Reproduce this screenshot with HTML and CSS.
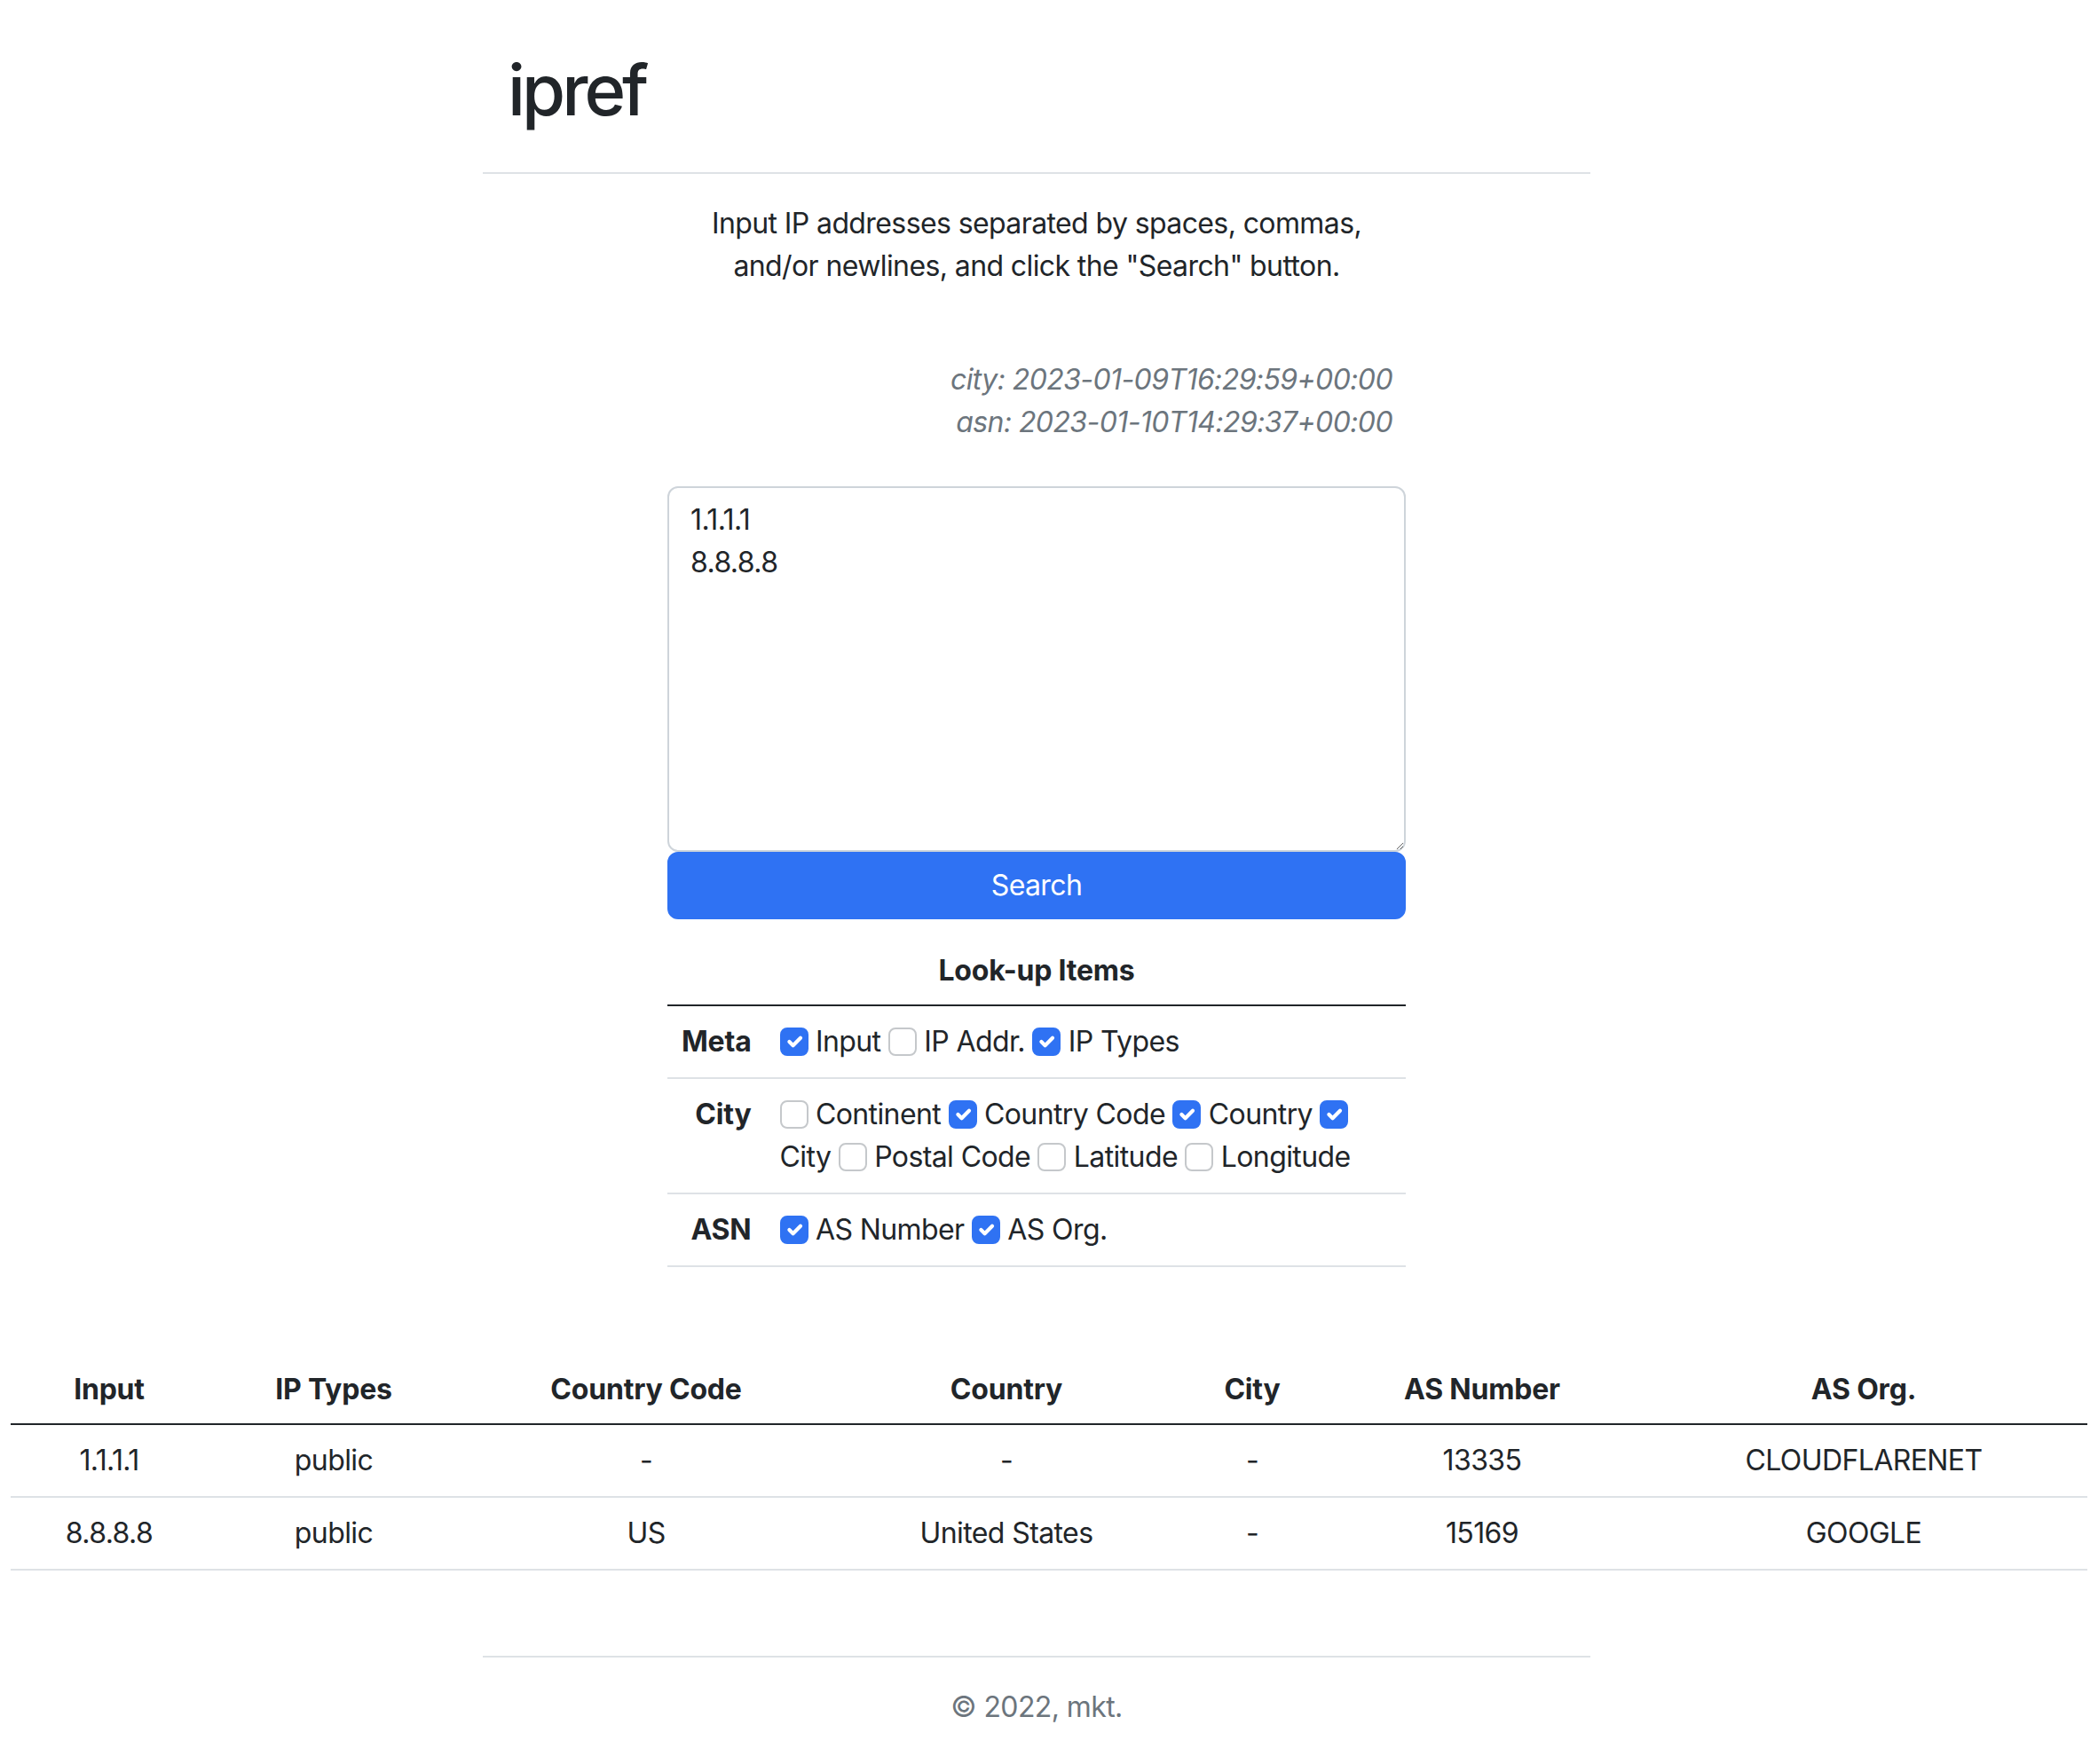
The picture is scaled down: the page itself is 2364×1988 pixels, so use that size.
FILE: index.html
```html
<!DOCTYPE html>
<html lang="en">
<head>
<meta charset="utf-8">
<title>ipref</title>
<link rel="stylesheet" href="styles.css">
</head>
<body>
<div class="container">
  <header class="site-header">
    <h1>ipref</h1>
  </header>
  <p class="lead">Input IP addresses separated by spaces, commas,<br>and/or newlines, and click the "Search" button.</p>
  <div class="column">
    <div class="versions">
      <div>city: 2023-01-09T16:29:59+00:00</div>
      <div>asn: 2023-01-10T14:29:37+00:00</div>
    </div>
    <textarea class="ipinput" rows="8">1.1.1.1
8.8.8.8</textarea>
    <button class="search" type="button">Search</button>
    <table class="lookup">
      <thead>
        <tr><th colspan="2" class="lookup-title">Look-up Items</th></tr>
      </thead>
      <tbody>
        <tr>
          <th class="cat">Meta</th>
          <td><span class="cb on"><svg viewBox="0 0 20 20"><path d="m6 10 3 3 6-6"/></svg></span> Input <span class="cb"></span> IP Addr. <span class="cb on"><svg viewBox="0 0 20 20"><path d="m6 10 3 3 6-6"/></svg></span> IP Types</td>
        </tr>
        <tr>
          <th class="cat">City</th>
          <td><span class="cb"></span> Continent <span class="cb on"><svg viewBox="0 0 20 20"><path d="m6 10 3 3 6-6"/></svg></span> Country Code <span class="cb on"><svg viewBox="0 0 20 20"><path d="m6 10 3 3 6-6"/></svg></span> Country <span class="cb on"><svg viewBox="0 0 20 20"><path d="m6 10 3 3 6-6"/></svg></span> City <span class="cb"></span> Postal Code <span class="cb"></span> Latitude <span class="cb"></span> Longitude</td>
        </tr>
        <tr>
          <th class="cat">ASN</th>
          <td><span class="cb on"><svg viewBox="0 0 20 20"><path d="m6 10 3 3 6-6"/></svg></span> AS Number <span class="cb on"><svg viewBox="0 0 20 20"><path d="m6 10 3 3 6-6"/></svg></span> AS Org.</td>
        </tr>
      </tbody>
    </table>
  </div>
</div>

<table class="results">
  <colgroup>
    <col class="c1"><col class="c2"><col class="c3"><col class="c4"><col class="c5"><col class="c6"><col class="c7">
  </colgroup>
  <thead>
    <tr><th>Input</th><th>IP Types</th><th>Country Code</th><th>Country</th><th>City</th><th>AS Number</th><th>AS Org.</th></tr>
  </thead>
  <tbody>
    <tr><td>1.1.1.1</td><td>public</td><td>-</td><td>-</td><td>-</td><td>13335</td><td>CLOUDFLARENET</td></tr>
    <tr><td>8.8.8.8</td><td>public</td><td>US</td><td>United States</td><td>-</td><td>15169</td><td>GOOGLE</td></tr>
  </tbody>
</table>

<div class="container">
  <footer class="site-footer">© 2022, mkt.</footer>
</div>
</body>
</html>
```

FILE: styles.css
```css
* { box-sizing: border-box; }

body {
  margin: 0;
  font-family: Inter, "Liberation Sans", sans-serif;
  font-size: 32px;
  line-height: 48px;
  letter-spacing: -0.6px;
  color: #212529;
  background: #fff;
}

.container {
  width: 1248px;
  margin-left: 544px;
}

.site-header {
  padding: 54px 0 45px 28px;
  border-bottom: 2px solid #dee2e6;
}

.site-header h1 {
  margin: 0;
  font-size: 79.5px;
  line-height: 95px;
  font-weight: 500;
  letter-spacing: -4px;
}

.lead {
  margin: 32px 0 0;
  text-align: center;
}

.column {
  width: 832px;
  margin: 0 auto;
}

.versions {
  margin-top: 80px;
  padding-right: 15px;
  text-align: right;
  font-style: italic;
  color: #6c757d;
}

.ipinput {
  display: block;
  width: 100%;
  height: 412px;
  margin: 48px 0 0;
  padding: 12px 24px;
  border: 2px solid #ced4da;
  border-radius: 12px;
  font: inherit;
  letter-spacing: inherit;
  color: #212529;
  resize: vertical;
  outline: none;
}

.search {
  display: block;
  width: 100%;
  margin: 0;
  padding: 12px 24px;
  border: 2px solid #2f72f3;
  border-radius: 12px;
  background: #2f72f3;
  color: #fff;
  font: inherit;
  letter-spacing: inherit;
}

.lookup {
  width: 100%;
  margin-top: 18px;
  border-collapse: separate;
  border-spacing: 0;
}

.lookup th,
.lookup td {
  padding: 16px;
  border-bottom: 2px solid #dee2e6;
  vertical-align: top;
}

.lookup th {
  letter-spacing: -0.2px;
}

.lookup .lookup-title {
  text-align: center;
  font-weight: 700;
  padding-bottom: 14px;
  border-bottom-color: #212529;
}

.lookup .cat {
  width: 110px;
  text-align: right;
  font-weight: 700;
}

.lookup td {
  text-align: left;
}

.cb {
  display: inline-block;
  width: 32px;
  height: 32px;
  margin-top: 8px;
  vertical-align: top;
  border: 2px solid #c5c8cb;
  border-radius: 8px;
  background: #fff;
}

.cb.on {
  background: #2f72f3;
  border-color: #2f72f3;
}

.cb svg {
  display: block;
  width: 28px;
  height: 28px;
}

.cb path {
  fill: none;
  stroke: #fff;
  stroke-width: 3;
  stroke-linecap: round;
  stroke-linejoin: round;
}

.results {
  width: 2340px;
  margin: 98px 12px 0;
  border-collapse: separate;
  border-spacing: 0;
  table-layout: fixed;
}

.results .c1 { width: 222px; }
.results .c2 { width: 284px; }
.results .c3 { width: 420px; }
.results .c4 { width: 392px; }
.results .c5 { width: 162px; }
.results .c6 { width: 356px; }
.results .c7 { width: 504px; }

.results th,
.results td {
  padding: 16px;
  text-align: center;
  border-bottom: 2px solid #dee2e6;
}

.results th {
  font-weight: 700;
  letter-spacing: -0.2px;
  padding-bottom: 14px;
  border-bottom-color: #212529;
}

.site-footer {
  margin-top: 96px;
  padding-top: 32px;
  padding-bottom: 32px;
  border-top: 2px solid #dee2e6;
  text-align: center;
  color: #6c757d;
}
```
